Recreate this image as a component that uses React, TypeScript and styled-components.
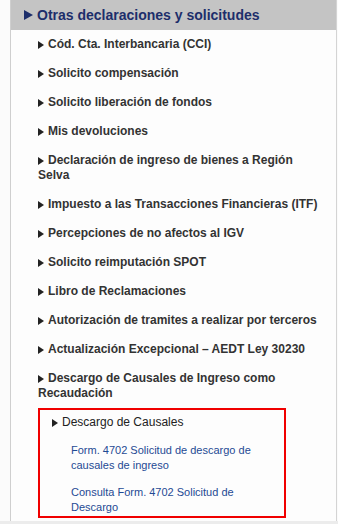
import React from 'react'
import styled, { createGlobalStyle } from 'styled-components'

const GlobalStyle = createGlobalStyle`
  html, body {
    margin: 0;
    padding: 0;
    background: #fbfbfb;
  }
  body {
    font-family: "Liberation Sans", Arial, sans-serif;
  }
`

interface MenuItem {
  label: string
}

const items: MenuItem[] = [
  { label: 'Cód. Cta. Interbancaria (CCI)' },
  { label: 'Solicito compensación' },
  { label: 'Solicito liberación de fondos' },
  { label: 'Mis devoluciones' },
  { label: 'Declaración de ingreso de bienes a Región Selva' },
  { label: 'Impuesto a las Transacciones Financieras (ITF)' },
  { label: 'Percepciones de no afectos al IGV' },
  { label: 'Solicito reimputación SPOT' },
  { label: 'Libro de Reclamaciones' },
  { label: 'Autorización de tramites a realizar por terceros' },
  { label: 'Actualización Excepcional – AEDT Ley 30230' },
  { label: 'Descargo de Causales de Ingreso como Recaudación' },
]

const links = [
  'Form. 4702 Solicitud de descargo de causales de ingreso',
  'Consulta Form. 4702 Solicitud de Descargo',
]

export default function App() {
  return (
    <>
      <GlobalStyle />
      <Page>
        <Panel>
          <Header>
            <Arrow size="big" />
            Otras declaraciones y solicitudes
          </Header>
          <List>
            {items.map((it, i) => (
              <Item key={i}>
                <Arrow />
                {it.label}
              </Item>
            ))}
            <Highlight>
              <SubTitle>
                <Arrow />
                Descargo de Causales
              </SubTitle>
              {links.map((l, i) => (
                <SubLink key={i} href="#">{l}</SubLink>
              ))}
            </Highlight>
          </List>
        </Panel>
        <Bottom />
      </Page>
    </>
  )
}

const Page = styled.div`
  padding-left: 10px;
  width: 328px;
`
const Panel = styled.div`
  width: 325px;
  border-left: 1px solid #cfcfcf;
  border-right: 1px solid #d4d4d4;
  background: #fdfdfd;
  padding-bottom: 3px;
`
const Bottom = styled.div`
  height: 4px;
  margin-left: -10px;
  width: 338px;
  background: #ececec;
`
const Header = styled.div`
  display: flex;
  align-items: center;
  height: 30px;
  background: #c4c4c4;
  padding-left: 13px;
  font-size: 14px;
  font-weight: bold;
  color: #1d2e6b;
  & > span {
    margin-right: 4px;
  }
`
const Arrow = styled.span<{ size?: 'big' }>`
  display: inline-block;
  width: 0;
  height: 0;
  border-style: solid;
  border-color: transparent;
  border-left-color: ${p => (p.size === 'big' ? '#1d2e6b' : '#222')};
  border-width: ${p => (p.size === 'big' ? '5px 0 5px 9px' : '4px 0 4px 6px')};
  margin-right: 4px;
  vertical-align: -1px;
`
const List = styled.ul`
  list-style: none;
  margin: 0;
  padding: 0 10px 0 27px;
`
const Item = styled.li`
  padding: 7px 0;
  font-size: 12px;
  line-height: 15px;
  font-weight: bold;
  color: #333;
`
const Highlight = styled.li`
  width: 222px;
  border: 2px solid #f00000;
  padding: 5px 10px 1px 12px;
`
const SubTitle = styled.div`
  font-size: 12px;
  line-height: 15px;
  color: #222;
  margin-bottom: 13px;
`
const SubLink = styled.a`
  display: block;
  margin-left: 19px;
  margin-bottom: 12px;
  font-size: 11px;
  line-height: 15px;
  color: #1f4a94;
  text-decoration: none;
  &:last-child {
    margin-bottom: 0;
  }
`
